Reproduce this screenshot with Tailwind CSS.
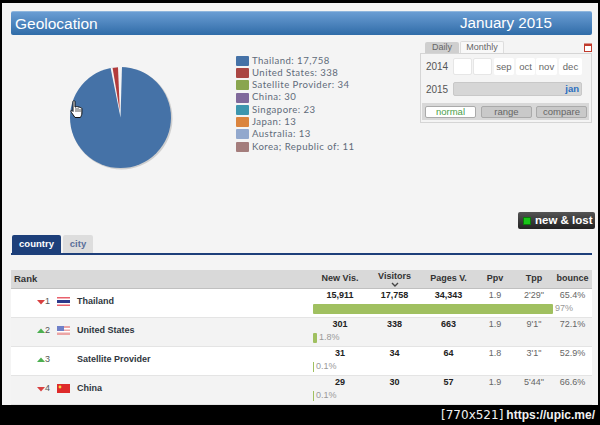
<!DOCTYPE html>
<html lang="en">
<head>
<meta charset="UTF-8">
<title>Geolocation</title>
<script src="https://cdn.jsdelivr.net/npm/@tailwindcss/browser@4"></script>
</head>
<body class="bg-black">
<div class="w-[600px] h-[425px] overflow-hidden bg-black pt-[3px] pl-[2px] pr-[2px] font-['Liberation_Sans',sans-serif]">
  <div class="h-[402px] bg-[#f4f4f4] pt-[8px] pl-[9px] pr-[6px] overflow-hidden">

    <!-- title bar -->
    <div class="h-[24px] flex items-center justify-between rounded-[2px] border-t border-[#8fb6dd] bg-gradient-to-b from-[#6a9dd3] to-[#2f6ca8] pl-[4px] pr-[40px] text-white text-[15.5px]">
      <span>Geolocation</span>
      <span class="text-[15.2px]">January 2015</span>
    </div>

    <!-- chart + calendar -->
    <div class="h-[177px] flex relative">
      <div class="w-[225px] relative shrink-0">
        <svg width="112" height="112" viewBox="0 0 112 112" class="ml-[53px] mt-[26px]">
          <circle cx="57.5" cy="57.5" r="51" fill="#cfcfcf"/>
          <circle cx="56.5" cy="56.5" r="50.5" fill="#4572a7"/>
          <path d="M56.5 56.5 L46.5 6.5 L58 5.5 Z" fill="#f4f4f4"/>
          <path d="M55.8 50 L54 6.2 L48.6 7 Z" fill="#b23c3c"/>
        </svg>
        <!-- mouse pointer over the pie -->
        <svg width="13" height="19" viewBox="0 0 13 19" class="absolute left-[59px] top-[65px]">
          <path d="M3 1.5c0-1 2-1 2 0V7l1 0c.5-.8 1.8-.6 2 .2.6-.6 1.8-.3 2 .5.7-.3 1.8 0 1.9 1V13c0 2-.8 3-1.5 4.5H5L1.5 12.5C.6 11 .8 10 2 10.5l1 1Z" fill="#fff" stroke="#111" stroke-width="1"/>
          <path d="M6 8v4M8 8v4M10 9v3" stroke="#111" stroke-width=".7" fill="none"/>
        </svg>
      </div>

      <ul class="mt-[19.5px] flex flex-col text-[9.6px] tracking-[0.45px] leading-[12.3px] text-[#5f6b7a] font-['Lato',sans-serif] w-[170px]">
        <li class="flex items-center gap-[3px]"><span class="w-[13px] h-[10px] rounded-[1px] bg-[#4572a7]"></span>Thailand: 17,758</li>
        <li class="flex items-center gap-[3px]"><span class="w-[13px] h-[10px] rounded-[1px] bg-[#aa4643]"></span>United States: 338</li>
        <li class="flex items-center gap-[3px]"><span class="w-[13px] h-[10px] rounded-[1px] bg-[#89a54e]"></span>Satellite Provider: 34</li>
        <li class="flex items-center gap-[3px]"><span class="w-[13px] h-[10px] rounded-[1px] bg-[#80699b]"></span>China: 30</li>
        <li class="flex items-center gap-[3px]"><span class="w-[13px] h-[10px] rounded-[1px] bg-[#3d96ae]"></span>Singapore: 23</li>
        <li class="flex items-center gap-[3px]"><span class="w-[13px] h-[10px] rounded-[1px] bg-[#db843d]"></span>Japan: 13</li>
        <li class="flex items-center gap-[3px]"><span class="w-[13px] h-[10px] rounded-[1px] bg-[#92a8cd]"></span>Australia: 13</li>
        <li class="flex items-center gap-[3px]"><span class="w-[13px] h-[10px] rounded-[1px] bg-[#a47d7c]"></span>Korea; Republic of: 11</li>
      </ul>

      <!-- month picker -->
      <div class="w-[172px] ml-auto mt-[6px] text-[9.5px] text-[#666]">
        <div class="flex items-end h-[12px] pl-[5px] text-[9px]">
          <span class="w-[34px] h-[11px] bg-[#cfcfcf] text-center leading-[11px] rounded-t-[2px]">Daily</span>
          <span class="w-[44px] h-[12px] bg-[#f8f8f8] border border-b-0 border-[#ddd] text-center leading-[11px] rounded-t-[2px] ml-[1px]">Monthly</span>
          <svg width="8" height="9" viewBox="0 0 8 9" class="ml-auto mb-[1px]"><rect x=".5" y="1" width="7" height="7.5" fill="#fff" stroke="#c0392b"/><rect x="1" y="1" width="6" height="2" fill="#c0392b"/></svg>
        </div>
        <div class="h-[70px] border border-[#d5d5d5] bg-[#f4f4f4] pt-[4px]">
          <div class="flex items-center h-[17px]">
            <span class="w-[32px] text-center text-[10px] text-[#555]">2014</span>
            <span class="w-[19px] h-[17px] bg-white border border-[#e6e6e6] rounded-[2px]"></span>
            <span class="w-[19px] h-[17px] ml-[1px] bg-white border border-[#e6e6e6] rounded-[2px]"></span>
            <span class="w-[20px] h-[17px] ml-[2px] bg-white rounded-[2px] text-center leading-[17px]">sep</span>
            <span class="w-[19px] h-[17px] ml-[2px] bg-white rounded-[2px] text-center leading-[17px]">oct</span>
            <span class="w-[21px] h-[17px] ml-[1px] bg-white rounded-[2px] text-center leading-[17px]">nov</span>
            <span class="w-[23px] h-[17px] ml-[2px] bg-white rounded-[2px] text-center leading-[17px]">dec</span>
          </div>
          <div class="flex items-center h-[14px] mt-[7px]">
            <span class="w-[32px] text-center text-[10px] text-[#555]">2015</span>
            <span class="w-[129px] h-[14px] bg-[#d6d6d6] border border-[#c8c8c8] rounded-[2px] text-right pr-[2px] leading-[12px] text-[#2a6fc0] font-bold">jan</span>
          </div>
          <div class="mt-[7px] mx-[1px] w-[167px] h-[17px] bg-[#d8d8d8] flex items-center pl-[3px] text-[9.5px]">
            <span class="w-[51px] h-[12px] bg-white border border-[#aaa] rounded-[2px] text-center leading-[10px] text-[#4aa04a]">normal</span>
            <span class="w-[51px] h-[12px] ml-[5px] bg-[#c9c9c9] border border-[#aaa] rounded-[2px] text-center leading-[10px]">range</span>
            <span class="w-[51px] h-[12px] ml-[4px] bg-[#c9c9c9] border border-[#aaa] rounded-[2px] text-center leading-[10px]">compare</span>
          </div>
        </div>
      </div>
    </div>

    <!-- new & lost button -->
    <div class="h-[17px] flex justify-end -mr-[3px]">
      <div class="w-[77px] h-[17px] rounded-[2px] bg-gradient-to-b from-[#555] to-[#222] flex items-center pl-[5px] gap-[4px] text-white text-[11.5px] font-bold">
        <span class="w-[8px] h-[8px] bg-[#18c418] border border-[#0a7a0a]"></span>new &amp; lost
      </div>
    </div>

    <!-- tabs -->
    <div class="mt-[6px] h-[18px] flex items-end gap-[2px] pl-[1px] border-b-2 border-[#1d3f7a] text-[9.5px] font-bold box-content">
      <span class="w-[49px] h-[18px] bg-[#1d3f7a] text-white text-center leading-[18px] rounded-t-[2px]">country</span>
      <span class="w-[30px] h-[18px] bg-[#dddddd] text-[#5a6f9a] text-center leading-[18px] rounded-t-[2px]">city</span>
    </div>

    <!-- table -->
    <div class="mt-[15px] text-[9px]">
      <div class="h-[19px] grid grid-cols-[300px_58px_51px_57px_36px_42px_35px] items-center bg-[#d9d9d9] border-b border-[#c0c0c0] font-bold text-[#333]">
        <span class="pl-[3px] text-[9.5px]">Rank</span>
        <span class="text-center">New Vis.</span>
        <span class="text-center leading-[9px]">Visitors<svg width="8" height="5" viewBox="0 0 8 5" class="mx-auto mt-[1px] block"><path d="M1 1l3 3 3-3" fill="none" stroke="#444" stroke-width="1.4"/></svg></span>
        <span class="text-center">Pages V.</span>
        <span class="text-center">Ppv</span>
        <span class="text-center">Tpp</span>
        <span class="text-center">bounce</span>
      </div>

      <!-- Thailand -->
      <div class="h-[29px] bg-white border-b border-[#e4e4e4] grid grid-cols-[300px_58px_51px_57px_36px_42px_35px] grid-rows-[14px_11px] items-center">
        <div class="row-span-2 flex items-center text-[#555]">
          <svg width="8" height="6" viewBox="0 0 8 6" class="ml-[26px]"><path d="M0 1h8L4 5.5Z" fill="#d84040"/></svg>
          <span class="w-[12px]">1</span>
          <svg width="13" height="9" viewBox="0 0 13 9"><rect width="13" height="9" fill="#e8606c"/><rect y="1.5" width="13" height="6" fill="#fff"/><rect y="3" width="13" height="3" fill="#2d3a8c"/></svg>
          <span class="ml-[7px] font-bold text-[#2f3640]">Thailand</span>
        </div>
        <span class="text-center font-bold text-[#222]">15,911</span>
        <span class="text-center font-bold text-[#222]">17,758</span>
        <span class="text-center font-bold text-[#222]">34,343</span>
        <span class="text-center text-[#666]">1.9</span>
        <span class="text-center text-[#666]">2'29"</span>
        <span class="text-center text-[#666]">65.4%</span>
        <div class="col-span-6 flex items-center pl-[2px] h-[11px]">
          <span class="w-[240px] h-[10px] bg-[#a0c060] rounded-[1px]"></span><span class="ml-[2px] text-[#999]">97%</span>
        </div>
      </div>

      <!-- United States -->
      <div class="h-[29px] bg-[#f3f3f3] border-b border-[#e4e4e4] grid grid-cols-[300px_58px_51px_57px_36px_42px_35px] grid-rows-[14px_11px] items-center">
        <div class="row-span-2 flex items-center text-[#555]">
          <svg width="8" height="6" viewBox="0 0 8 6" class="ml-[26px]"><path d="M0 5h8L4 .5Z" fill="#4caf50"/></svg>
          <span class="w-[12px]">2</span>
          <svg width="13" height="9" viewBox="0 0 13 9"><rect width="13" height="9" fill="#eba5a5"/><rect y="2" width="13" height="1.5" fill="#fff"/><rect y="5" width="13" height="1.5" fill="#fff"/><rect width="7" height="5" fill="#6f80c8"/></svg>
          <span class="ml-[7px] font-bold text-[#2f3640]">United States</span>
        </div>
        <span class="text-center font-bold text-[#222]">301</span>
        <span class="text-center font-bold text-[#222]">338</span>
        <span class="text-center font-bold text-[#222]">663</span>
        <span class="text-center text-[#666]">1.9</span>
        <span class="text-center text-[#666]">9'1"</span>
        <span class="text-center text-[#666]">72.1%</span>
        <div class="col-span-6 flex items-center pl-[2px] h-[11px]">
          <span class="w-[4px] h-[10px] bg-[#a0c060] rounded-[1px]"></span><span class="ml-[2px] text-[#999]">1.8%</span>
        </div>
      </div>

      <!-- Satellite Provider -->
      <div class="h-[29px] bg-white border-b border-[#e4e4e4] grid grid-cols-[300px_58px_51px_57px_36px_42px_35px] grid-rows-[14px_11px] items-center">
        <div class="row-span-2 flex items-center text-[#555]">
          <svg width="8" height="6" viewBox="0 0 8 6" class="ml-[26px]"><path d="M0 5h8L4 .5Z" fill="#4caf50"/></svg>
          <span class="w-[12px]">3</span>
          <span class="w-[13px]"></span>
          <span class="ml-[7px] font-bold text-[#2f3640]">Satellite Provider</span>
        </div>
        <span class="text-center font-bold text-[#222]">31</span>
        <span class="text-center font-bold text-[#222]">34</span>
        <span class="text-center font-bold text-[#222]">64</span>
        <span class="text-center text-[#666]">1.8</span>
        <span class="text-center text-[#666]">3'1"</span>
        <span class="text-center text-[#666]">52.9%</span>
        <div class="col-span-6 flex items-center pl-[2px] h-[11px]">
          <span class="w-[1px] h-[10px] bg-[#a0c060]"></span><span class="ml-[2px] text-[#999]">0.1%</span>
        </div>
      </div>

      <!-- China -->
      <div class="h-[29px] bg-[#f3f3f3] border-b border-[#e4e4e4] grid grid-cols-[300px_58px_51px_57px_36px_42px_35px] grid-rows-[14px_11px] items-center">
        <div class="row-span-2 flex items-center text-[#555]">
          <svg width="8" height="6" viewBox="0 0 8 6" class="ml-[26px]"><path d="M0 1h8L4 5.5Z" fill="#d84040"/></svg>
          <span class="w-[12px]">4</span>
          <svg width="13" height="9" viewBox="0 0 13 9"><rect width="13" height="9" fill="#de2a2a"/><circle cx="3" cy="3" r="1.4" fill="#f5d742"/></svg>
          <span class="ml-[7px] font-bold text-[#2f3640]">China</span>
        </div>
        <span class="text-center font-bold text-[#222]">29</span>
        <span class="text-center font-bold text-[#222]">30</span>
        <span class="text-center font-bold text-[#222]">57</span>
        <span class="text-center text-[#666]">1.9</span>
        <span class="text-center text-[#666]">5'44"</span>
        <span class="text-center text-[#666]">66.6%</span>
        <div class="col-span-6 flex items-center pl-[2px] h-[11px]">
          <span class="w-[1px] h-[10px] bg-[#a0c060]"></span><span class="ml-[2px] text-[#999]">0.1%</span>
        </div>
      </div>
    </div>
  </div>

  <!-- image host caption -->
  <div class="h-[20px] flex items-center justify-end pr-[3px] text-[#f0f0f0]">
    <span class="text-[12px] font-['DejaVu_Sans',sans-serif]">[770x521]</span><span class="ml-[3px] text-[12px] font-bold">https://upic.me/</span>
  </div>
</div>
</body>
</html>
